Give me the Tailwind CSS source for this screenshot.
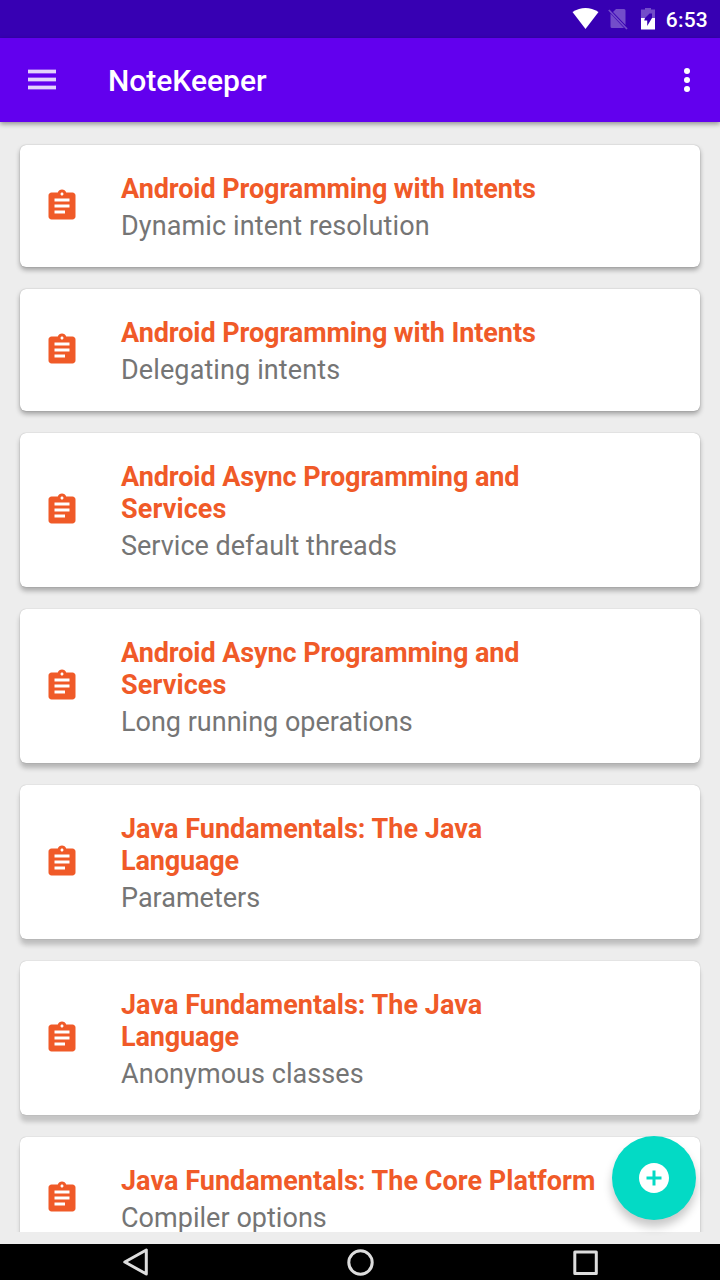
<!DOCTYPE html>
<html lang="en">
<head>
<meta charset="utf-8">
<title>NoteKeeper</title>
<script src="https://cdn.jsdelivr.net/npm/@tailwindcss/browser@4"></script>
</head>
<body class="relative flex h-[1280px] w-[720px] flex-col overflow-hidden bg-[#ededed] font-[Roboto,sans-serif]">
<svg class="hidden">
  <symbol id="note" viewBox="0 0 24 24"><path fill="#f05a28" d="M19 3h-4.18C14.4 1.84 13.3 1 12 1c-1.3 0-2.4.84-2.82 2H5c-1.1 0-2 .9-2 2v14c0 1.1.9 2 2 2h14c1.1 0 2-.9 2-2V5c0-1.1-.9-2-2-2zm-7 0c.55 0 1 .45 1 1s-.45 1-1 1-1-.45-1-1 .45-1 1-1zm2 14H7v-2h7v2zm3-4H7v-2h10v2zm0-4H7V7h10v2z"/></symbol>
</svg>
<div class="flex h-[38px] shrink-0 items-center justify-end bg-[#3700b3] pr-3">
  <svg class="mr-[9px] h-[22px] w-[27px]" viewBox="0 0 27 22"><path fill="#fff" d="M.5 4Q13.500-4 26.500 4L13.500 21Z"/></svg>
  <svg class="mr-[13px] h-[22px] w-[20px]" viewBox="0 0 20 22"><path fill="#fff" fill-opacity=".3" d="M8 1h8a1.500 1.500 0 0 1 1.500 1.500V17L5 4ZM2.500 5.500 16 20H4a1.500 1.500 0 0 1-1.500-1.500Z"/><path stroke="#fff" stroke-opacity=".3" stroke-width="1.700" d="M.8 2 19 21"/></svg>
  <svg class="mr-[11px] h-[22px] w-[14px]" viewBox="0 0 14 22"><path fill="#fff" fill-opacity=".3" d="M4 0h6v1.500h4v8.500h-3V5.500H8.500L4 10H0V1.500h4Z"/><path fill="#fff" d="M0 10h4l-.8 2.500h3V18L11 10h3v11.500H0Z"/></svg>
  <span class="pt-[3px] text-[21px] font-medium leading-[35px] tracking-[0.2px] text-white">6:53</span>
</div>
<header class="relative z-10 flex h-[84px] shrink-0 items-center bg-[#6200ee] pl-7 pr-[29px] shadow-[0_2px_5px_rgba(0,0,0,.4)]">
  <svg class="h-[22px] w-7" viewBox="0 0 28 22" fill="#fff"><path fill-opacity=".3" d="M0 0h28v5H0zM0 8h28v5H0zM0 16h28v5H0z"/><path fill-opacity=".75" d="M0 1h28v3H0zM0 9h28v3H0zM0 17h28v3H0z"/></svg>
  <h1 class="ml-[52px] pt-0.5 text-[30px] font-medium leading-9 text-white">NoteKeeper</h1>
  <svg class="ml-auto h-6 w-2" viewBox="0 0 8 24" fill="#fff"><circle cx="4" cy="3" r="3"/><circle cx="4" cy="12" r="3"/><circle cx="4" cy="21" r="3"/></svg>
</header>
<main class="flex h-[1110px] shrink-0 flex-col gap-[22px] overflow-hidden px-5 pt-[23px] text-[27px] leading-8 text-[#757575]">
  <article class="flex h-[122px] shrink-0 items-center rounded-md bg-white pl-6 shadow-[0_0_1px_rgba(0,0,0,.35),0_3px_5px_rgba(0,0,0,.32)]"><svg class="h-9 w-9 shrink-0"><use href="#note"/></svg><div class="ml-[41px] pt-0.5"><h2 class="w-[480px] font-bold tracking-[-0.08px] text-[#f05a28]">Android Programming with Intents</h2><p class="mt-[5px] tracking-[0.11px]">Dynamic intent resolution</p></div></article>
  <article class="flex h-[122px] shrink-0 items-center rounded-md bg-white pl-6 shadow-[0_0_1px_rgba(0,0,0,.35),0_3px_5px_rgba(0,0,0,.32)]"><svg class="h-9 w-9 shrink-0"><use href="#note"/></svg><div class="ml-[41px] pt-0.5"><h2 class="w-[480px] font-bold tracking-[-0.08px] text-[#f05a28]">Android Programming with Intents</h2><p class="mt-[5px] tracking-[0.11px]">Delegating intents</p></div></article>
  <article class="flex h-[154px] shrink-0 items-center rounded-md bg-white pl-6 shadow-[0_0_1px_rgba(0,0,0,.35),0_4px_5px_rgba(0,0,0,.28)]"><svg class="h-9 w-9 shrink-0"><use href="#note"/></svg><div class="ml-[41px] pt-0.5"><h2 class="w-[480px] font-bold tracking-[-0.08px] text-[#f05a28]">Android Async Programming and<br><span class="tracking-[0.1px]">Services</span></h2><p class="mt-[5px]">Service default threads</p></div></article>
  <article class="flex h-[154px] shrink-0 items-center rounded-md bg-white pl-6 shadow-[0_0_1px_rgba(0,0,0,.35),0_5px_5px_rgba(0,0,0,.24)]"><svg class="h-9 w-9 shrink-0"><use href="#note"/></svg><div class="ml-[41px] pt-0.5"><h2 class="w-[480px] font-bold tracking-[-0.08px] text-[#f05a28]">Android Async Programming and<br><span class="tracking-[0.1px]">Services</span></h2><p class="mt-[5px]">Long running operations</p></div></article>
  <article class="flex h-[154px] shrink-0 items-center rounded-md bg-white pl-6 shadow-[0_0_1px_rgba(0,0,0,.35),0_6px_5px_rgba(0,0,0,.2)]"><svg class="h-9 w-9 shrink-0"><use href="#note"/></svg><div class="ml-[41px] pt-0.5"><h2 class="w-[480px] font-bold tracking-[0.04px] text-[#f05a28]">Java Fundamentals: The Java<br><span class="tracking-[-0.15px]">Language</span></h2><p class="mt-[5px]">Parameters</p></div></article>
  <article class="flex h-[154px] shrink-0 items-center rounded-md bg-white pl-6 shadow-[0_0_1px_rgba(0,0,0,.35),0_7px_4px_rgba(0,0,0,.17)]"><svg class="h-9 w-9 shrink-0"><use href="#note"/></svg><div class="ml-[41px] pt-0.5"><h2 class="w-[480px] font-bold tracking-[0.04px] text-[#f05a28]">Java Fundamentals: The Java<br><span class="tracking-[-0.15px]">Language</span></h2><p class="mt-[5px] tracking-[0.06px]">Anonymous classes</p></div></article>
  <article class="flex h-[122px] shrink-0 items-center rounded-md bg-white pl-6 shadow-[0_0_1px_rgba(0,0,0,.35),0_7px_4px_rgba(0,0,0,.17)]"><svg class="h-9 w-9 shrink-0"><use href="#note"/></svg><div class="ml-[41px] pt-0.5"><h2 class="w-[480px] font-bold tracking-[0.04px] text-[#f05a28]">Java Fundamentals: The Core Platform</h2><p class="mt-[5px] tracking-[0.03px]">Compiler options</p></div></article>
</main>
<nav class="mt-3 flex h-9 shrink-0 items-center justify-between bg-black pl-[122px] pr-[121px]">
  <svg class="h-9 w-7" viewBox="0 0 28 36" fill="none" stroke="#ddd" stroke-width="3" stroke-linejoin="round"><path d="M2.800 18 24.300 6v24Z"/></svg>
  <svg class="size-7" viewBox="0 0 28 28" fill="none" stroke="#ddd" stroke-width="3"><circle cx="13.500" cy="14.500" r="11.700"/></svg>
  <svg class="size-7" viewBox="0 0 28 28" fill="none" stroke="#ddd" stroke-width="3" stroke-linejoin="round"><path d="M3.800 4h21.500v21.500H3.800z"/></svg>
</nav>
<button class="absolute left-[612px] top-[1136px] z-20 flex size-[84px] items-center justify-center rounded-full bg-[#03dac5] shadow-[0_7px_10px_rgba(0,0,0,.22)]" aria-label="Add note">
  <svg class="size-9" viewBox="0 0 24 24" fill="#fff"><path d="M12 2C6.480 2 2 6.480 2 12s4.480 10 10 10 10-4.480 10-10S17.520 2 12 2zm5 11h-4v4h-2v-4H7v-2h4V7h2v4h4v2z"/></svg>
</button>
</body>
</html>
